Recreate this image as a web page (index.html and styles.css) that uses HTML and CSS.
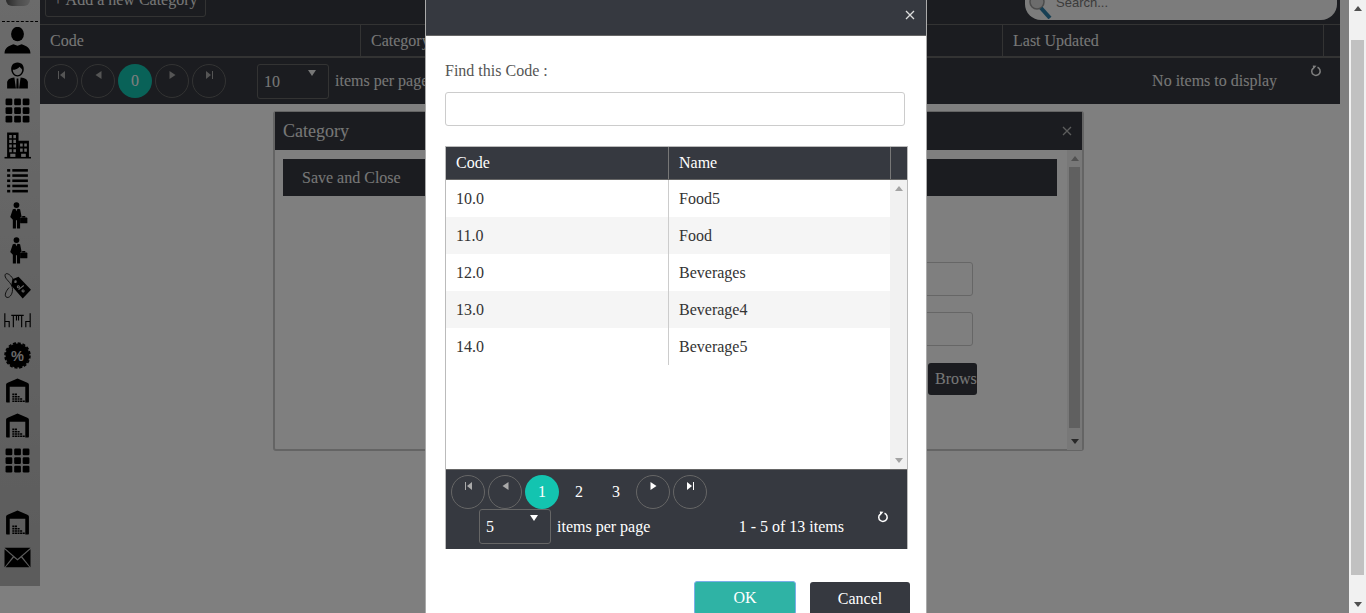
FILE: index.html
```html
<!DOCTYPE html>
<html lang="en">
<head>
  <meta charset="UTF-8">
  <title>Category</title>
  <link rel="stylesheet" href="styles.css">
</head>
<body>

<svg class="icon-defs" xmlns="http://www.w3.org/2000/svg">
  <symbol id="i-person" viewBox="0 0 26 26">
    <ellipse cx="13" cy="6.8" rx="6.2" ry="7"/>
    <path d="M0.5 25.5C0.5 20 4 18.5 9 16.5L13 18L17 16.5C22 18.5 25.5 20 25.5 25.5Z"/>
  </symbol>
  <symbol id="i-staff" viewBox="0 0 26 26">
    <path fill-rule="evenodd" d="M13 0.5C8.5 0.5 6.5 4 7 8C7.5 11 9.5 14 13 14C16.5 14 18.500 11 19 8C19.500 4 17.500 0.500 13 0.500ZM8.500 7.500C10.500 7.500 14 6.500 15 4.500C16 6 17.500 6.500 17.500 7.500C17.500 10 15.500 12.800 13 12.800C10.500 12.800 8.500 10 8.500 7.500Z"/>
    <path d="M3 25.500V20C3 17 6 15.500 10 15L11.500 25.500Z"/>
    <path d="M23 25.500V20C23 17 20 15.500 16 15L14.500 25.500Z"/>
    <path d="M12.200 16H13.800L14.200 25.500H11.800Z"/>
  </symbol>
  <symbol id="i-grid" viewBox="0 0 26 26">
    <rect x="1.500" y="1.500" width="6.500" height="6.500" rx="1.200"/><rect x="9.800" y="1.500" width="6.500" height="6.500" rx="1.200"/><rect x="18" y="1.500" width="6.500" height="6.500" rx="1.200"/>
    <rect x="1.500" y="9.800" width="6.500" height="6.500" rx="1.200"/><rect x="9.800" y="9.800" width="6.500" height="6.500" rx="1.200"/><rect x="18" y="9.800" width="6.500" height="6.500" rx="1.200"/>
    <rect x="1.500" y="18" width="6.500" height="6.500" rx="1.200"/><rect x="9.800" y="18" width="6.500" height="6.500" rx="1.200"/><rect x="18" y="18" width="6.500" height="6.500" rx="1.200"/>
  </symbol>
  <symbol id="i-building" viewBox="0 0 26 26">
    <path fill-rule="evenodd" d="M3 0.500H14V8.500H24V24H3ZM5 3V6H7.500V3ZM9 3V6H11.500V3ZM5 7.500V10.500H7.500V7.500ZM9 7.500V10.500H11.500V7.500ZM5 12V15H7.500V12ZM9 12V15H11.500V12ZM15.500 11V14H18V11ZM19.500 11V14H22V11ZM5 16.500V19.500H7.500V16.500ZM9 16.500V19.500H11.500V16.500ZM15.500 16V19H18V16ZM19.500 16V19H22V16ZM6 21V24H11V21ZM16.500 21V24H21V21Z"/>
    <rect x="0.500" y="24" width="25.500" height="1.500"/>
  </symbol>
  <symbol id="i-list" viewBox="0 0 26 26">
    <rect x="3" y="2" width="3" height="2.500"/><rect x="8" y="2" width="15" height="2.500"/>
    <rect x="3" y="7" width="3" height="2.500"/><rect x="8" y="7" width="15" height="2.500"/>
    <rect x="3" y="12" width="3" height="2.500"/><rect x="8" y="12" width="15" height="2.500"/>
    <rect x="3" y="17" width="3" height="2.500"/><rect x="8" y="17" width="15" height="2.500"/>
    <rect x="3" y="22" width="3" height="2.500"/><rect x="8" y="22" width="15" height="2.500"/>
  </symbol>
  <symbol id="i-agent" viewBox="0 0 26 26">
    <circle cx="12" cy="3" r="2.800"/>
    <path d="M8.500 7L11 6.500L12 9L13 6.500L15.500 7L17 14.500L15.500 15V25.500H12.500V17.500H11.500V25.500H8.500V17L6 14.500Z"/>
    <rect x="15.500" y="15" width="7" height="5.500" rx="0.600"/>
    <rect x="17.500" y="13.500" width="3" height="1.500"/>
  </symbol>
  <symbol id="i-tag" viewBox="0 0 26 26">
    <path fill="none" stroke="#000" stroke-width="0.800" d="M10 9C6 1 1 0 1 3.500C1 7 7 10 8 15C9 20 6 25 3 24.500C0 24 1 19 5 15"/>
    <path fill-rule="evenodd" d="M8 7L14 4.500L26 17L18 25.500L7 13ZM11 8A1.300 1.300 0 1 0 11 10.600A1.300 1.300 0 1 0 11 8Z"/>
    <path fill="none" stroke="#cfcfcf" stroke-width="1" d="M14 17L19 13M14.500 13.500A1 1 0 1 0 14.600 13.600M19 17.500A1 1 0 1 0 19.100 17.600"/>
  </symbol>
  <symbol id="i-tables" viewBox="0 0 26 26">
    <path fill="none" stroke="#000" stroke-width="1.100" d="M0.800 6V19.500M0.800 14H5V19.500M25.200 6V19.500M25.200 14H21V19.500M7 8H19M9 8V19.500M17 8V19.500M12 8V13M14 8V13"/>
  </symbol>
  <symbol id="i-sale" viewBox="0 0 26 26">
    <circle cx="13" cy="13" r="11.500"/>
    <circle cx="13" cy="13" r="12" fill="none" stroke="#000" stroke-width="1.500" stroke-dasharray="3 1.700"/>
    <text class="icon-percent" x="13" y="18" text-anchor="middle">%</text>
  </symbol>
  <symbol id="i-store" viewBox="0 0 26 26">
    <path fill-rule="evenodd" d="M2 7.500C2 6.500 2.500 6 3.500 5.500L13 1.500L22.500 5.500C23.500 6 24 6.500 24 7.500V23.500C24 24.200 23.600 24.500 23 24.500H3C2.400 24.500 2 24.200 2 23.500ZM5.500 9.500V24.500H20.500V9.500Z"/>
    <path d="M8 16H10V17.500H8ZM10.500 16H12.500V17.500H10.500ZM8 18.200H10V19.700H8ZM10.500 18.200H12.500V19.700H10.500ZM13 18.200H15V19.700H13ZM8 20.400H10V21.900H8ZM10.500 20.400H12.500V21.900H10.500ZM13 20.400H15V21.900H13ZM15.500 20.400H17.500V21.900H15.500ZM8 22.600H10V24H8ZM10.500 22.600H12.500V24H10.500ZM13 22.600H15V24H13ZM15.500 22.600H17.500V24H15.500ZM18 22.600H20V24H18Z"/>
  </symbol>
  <symbol id="i-mail" viewBox="0 0 26 26">
    <path d="M0.500 3.500H25.500L13 14.500Z"/>
    <path d="M0.500 5L8.500 12L0.500 22.500Z"/>
    <path d="M25.500 5L17.500 12L25.500 22.500Z"/>
    <path d="M9.500 13L13 16L16.500 13L24.500 22.500H1.500Z"/>
  </symbol>
  <symbol id="i-refresh" viewBox="0 0 12 12">
    <path fill="none" stroke="currentColor" stroke-width="1.500" d="M7.500 2.300A4.200 4.200 0 1 1 3 3.200"/>
    <path fill="currentColor" d="M2.800 0.500L6.500 0.800L3.200 4.800Z"/>
  </symbol>
  <symbol id="i-first" viewBox="0 0 9 8">
    <path fill="currentColor" d="M1 0H2V8H1ZM8 0V8L3 4Z"/>
  </symbol>
  <symbol id="i-prev" viewBox="0 0 9 8">
    <path fill="currentColor" d="M7.500 0V8L1.500 4Z"/>
  </symbol>
  <symbol id="i-next" viewBox="0 0 9 8">
    <path fill="currentColor" d="M1.500 0V8L7.500 4Z"/>
  </symbol>
  <symbol id="i-last" viewBox="0 0 9 8">
    <path fill="currentColor" d="M8 0H7V8H8ZM1 0V8L6 4Z"/>
  </symbol>
</svg>

<div class="page">
  <aside class="sidebar">
    <div class="logo"></div>
    <div class="logo-rule"></div>
    <nav class="nav">
      <svg class="nav-icon"><use href="#i-person"/></svg>
      <svg class="nav-icon"><use href="#i-staff"/></svg>
      <svg class="nav-icon"><use href="#i-grid"/></svg>
      <svg class="nav-icon"><use href="#i-building"/></svg>
      <svg class="nav-icon"><use href="#i-list"/></svg>
      <svg class="nav-icon"><use href="#i-agent"/></svg>
      <svg class="nav-icon"><use href="#i-agent"/></svg>
      <svg class="nav-icon"><use href="#i-tag"/></svg>
      <svg class="nav-icon"><use href="#i-tables"/></svg>
      <svg class="nav-icon"><use href="#i-sale"/></svg>
      <svg class="nav-icon"><use href="#i-store"/></svg>
      <svg class="nav-icon"><use href="#i-store"/></svg>
      <svg class="nav-icon nav-icon-last"><use href="#i-grid"/></svg>
      <svg class="nav-icon"><use href="#i-store"/></svg>
      <svg class="nav-icon"><use href="#i-mail"/></svg>
    </nav>
  </aside>

  <main class="content">
    <section class="list-panel">
      <div class="toolbar">
        <button class="add-btn">+ Add a new Category</button>
        <div class="search">
          <svg class="search-icon" viewBox="0 0 24 24">
            <circle cx="9" cy="7" r="7" fill="#d8d8d8" stroke="#999" stroke-width="1.500"/>
            <path d="M13 13L22 23" stroke="#2e7fa8" stroke-width="4"/>
          </svg>
          <span>Search...</span>
        </div>
      </div>
      <div class="list-head">
        <div class="list-col list-col-code">Code</div>
        <div class="list-col list-col-cat">Category</div>
        <div class="list-col list-col-date">Last Updated</div>
        <div class="list-col-end"></div>
      </div>
      <div class="pager list-pager">
        <div class="pager-nav">
          <a class="page-arrow off"><svg><use href="#i-first"/></svg></a>
          <a class="page-arrow off"><svg><use href="#i-prev"/></svg></a>
          <a class="page-num current">0</a>
          <a class="page-arrow off"><svg><use href="#i-next"/></svg></a>
          <a class="page-arrow off"><svg><use href="#i-last"/></svg></a>
        </div>
        <div class="page-size list-size">10<i class="caret"></i></div>
        <span class="page-size-label">items per page</span>
        <span class="page-info">No items to display</span>
        <svg class="refresh"><use href="#i-refresh"/></svg>
      </div>
    </section>
  </main>

  <div class="window">
    <div class="window-title">
      <span>Category</span>
      <svg class="close-x" viewBox="0 0 10 10"><path d="M1 1L9 9M9 1L1 9"/></svg>
    </div>
    <div class="window-body">
      <div class="window-main">
        <div class="save-bar">Save and Close</div>
        <div class="window-form">
          <div class="form-input"></div>
          <div class="form-input"></div>
          <div class="browse">Browse</div>
        </div>
      </div>
      <div class="vscroll window-scroll">
        <i class="arrow-up"></i>
        <div class="vscroll-thumb"></div>
        <i class="arrow-down"></i>
      </div>
    </div>
  </div>

  <div class="backdrop"></div>

  <div class="modal">
    <div class="modal-head">
      <svg class="close-x" viewBox="0 0 10 10"><path d="M1 1L9 9M9 1L1 9"/></svg>
    </div>
    <div class="modal-body">
      <label class="find-label">Find this Code :</label>
      <div class="find-input"></div>
      <div class="lookup">
        <div class="lookup-head">
          <div class="lookup-th">Code</div>
          <div class="lookup-th">Name</div>
          <div></div>
        </div>
        <div class="lookup-body">
          <div class="lookup-rows">
            <div class="lookup-row"><div>10.0</div><div>Food5</div></div>
            <div class="lookup-row alt"><div>11.0</div><div>Food</div></div>
            <div class="lookup-row"><div>12.0</div><div>Beverages</div></div>
            <div class="lookup-row alt"><div>13.0</div><div>Beverage4</div></div>
            <div class="lookup-row"><div>14.0</div><div>Beverage5</div></div>
          </div>
          <div class="vscroll lookup-scroll">
            <i class="arrow-up"></i>
            <i class="arrow-down"></i>
          </div>
        </div>
        <div class="lookup-pager">
          <div class="pager-nav">
            <a class="page-arrow off"><svg><use href="#i-first"/></svg></a>
            <a class="page-arrow off"><svg><use href="#i-prev"/></svg></a>
            <a class="page-num current">1</a>
            <a class="page-num">2</a>
            <a class="page-num">3</a>
            <a class="page-arrow"><svg><use href="#i-next"/></svg></a>
            <a class="page-arrow"><svg><use href="#i-last"/></svg></a>
          </div>
          <div class="pager">
            <div class="page-size lookup-size">5<i class="caret"></i></div>
            <span class="page-size-label">items per page</span>
            <span class="page-info">1 - 5 of 13 items</span>
            <svg class="refresh"><use href="#i-refresh"/></svg>
          </div>
        </div>
      </div>
      <div class="modal-actions">
        <button class="btn btn-ok">OK</button>
        <button class="btn btn-cancel">Cancel</button>
      </div>
    </div>
  </div>
</div>

<div class="page-scroll">
  <i class="arrow-up"></i>
  <div class="page-scroll-thumb"></div>
  <i class="arrow-down"></i>
</div>

</body>
</html>
```

FILE: styles.css
```css
* { box-sizing: border-box; }

html, body {
  margin: 0;
  height: 613px;
  overflow: hidden;
}

body {
  display: flex;
  background: #fff;
  font-family: "Liberation Serif", serif;
  font-size: 16px;
}

.icon-defs { display: none; }

.page {
  position: relative;
  display: flex;
  align-items: flex-start;
  width: 1349px;
  height: 613px;
  overflow: hidden;
  background: #fff;
}

/* sidebar */
.sidebar {
  flex: 0 0 40px;
  height: 586px;
  background: linear-gradient(#d6d6d6, #b8b8b8);
}

.logo {
  width: 24px;
  height: 6px;
  margin-left: 6px;
  border-radius: 0 0 12px 12px;
  background: linear-gradient(90deg, #555, #999 50%, #bbb);
}

.logo-rule {
  margin: 15px 2px 0;
  border-top: 1px dashed #000;
}

.nav {
  display: flex;
  flex-direction: column;
  margin-top: 5px;
  padding-left: 4px;
}

.nav-icon {
  width: 27px;
  height: 27px;
  margin-bottom: 8px;
  fill: #000;
}

.nav-icon-last { margin-bottom: 35px; }

.icon-percent {
  fill: #d0d0d0;
  font-family: "Liberation Sans", sans-serif;
  font-size: 14px;
  font-weight: bold;
}

/* list behind the dialogs, scrolled up a little */
.content {
  flex: 0 0 1300px;
  margin-top: -17px;
}

.list-panel {
  background: #363940;
  color: #eee;
}

.toolbar {
  display: flex;
  justify-content: space-between;
  height: 41px;
  padding: 0 3px 0 5px;
}

.add-btn {
  width: 161px;
  height: 34px;
  border: 1px solid #666;
  border-radius: 3px;
  background: none;
  color: #eee;
  font: 16px "Liberation Serif", serif;
}

.search {
  display: flex;
  align-items: flex-end;
  gap: 4px;
  width: 312px;
  height: 37px;
  padding: 0 0 10px 3px;
  border-radius: 0 0 16px 16px;
  background: #f8f8f8;
  color: #777;
  font: 13px "Liberation Sans", sans-serif;
}

.search-icon {
  flex: none;
  width: 24px;
  height: 24px;
  margin-bottom: -9px;
}

.list-head {
  display: flex;
  height: 34px;
  border-top: 1px solid #666;
  border-bottom: 2px solid #666;
  line-height: 32px;
}

.list-col {
  padding-left: 10px;
  border-right: 1px solid #666;
}

.list-col-code { width: 321px; }
.list-col-cat { width: 642px; }
.list-col-date { width: 321px; }
.list-col-end { flex: 1; }

/* pager parts, shared by both grids */
.pager {
  display: flex;
  align-items: center;
  color: #fff;
}

.list-pager {
  height: 46px;
  padding-left: 4px;
  color: #eee;
}

.pager-nav {
  display: flex;
  gap: 3px;
}

.page-arrow {
  display: flex;
  justify-content: center;
  width: 34px;
  height: 34px;
  padding-top: 6px;
  border: 1px solid #666;
  border-radius: 50%;
  color: #fff;
}

.page-arrow.off { color: #aaa; }

.page-arrow svg {
  width: 9px;
  height: 8px;
}

.page-num {
  width: 34px;
  height: 34px;
  color: #fff;
  line-height: 34px;
  text-align: center;
}

.page-num.current {
  border-radius: 50%;
  background: #13c4b0;
}

.page-size {
  position: relative;
  width: 72px;
  height: 35px;
  padding-left: 6px;
  border: 1px solid #666;
  border-radius: 3px;
  line-height: 33px;
}

.list-size { margin-left: 31px; }
.lookup-size { margin-left: 33px; }

.caret {
  position: absolute;
  top: 5px;
  right: 12px;
  border: 4px solid transparent;
  border-top: 6px solid currentColor;
  border-bottom: 0;
}

.page-size-label { margin-left: 6px; }

.page-info { margin-left: auto; }

.refresh {
  flex: none;
  width: 12px;
  height: 12px;
  margin: 0 18px 20px 33px;
  color: #fff;
}

/* category window */
.window {
  position: absolute;
  top: 111px;
  left: 273px;
  width: 811px;
  height: 340px;
  border: 2px solid #c8c8c8;
  border-top-width: 1px;
  border-radius: 3px;
  background: #fff;
}

.window-title {
  display: flex;
  justify-content: space-between;
  align-items: center;
  height: 38px;
  padding: 0 10px 0 8px;
  background: #363940;
  color: #eee;
  font-size: 18px;
}

.close-x {
  width: 10px;
  height: 10px;
  fill: none;
  stroke: #ddd;
  stroke-width: 1.300;
}

.window .close-x { stroke: #bbb; }

.window-body {
  display: flex;
  height: 300px;
}

.window-main {
  flex: 0 0 792px;
  padding: 9px 9px 0 8px;
}

.save-bar {
  width: 774px;
  height: 37px;
  padding-left: 19px;
  background: #363940;
  color: #eee;
  line-height: 37px;
}

.window-form {
  display: flex;
  flex-direction: column;
  align-items: flex-end;
  gap: 16px;
  margin-top: 66px;
  padding-right: 85px;
}

.form-input {
  width: 400px;
  height: 34px;
  border: 1px solid #ccc;
  border-radius: 3px;
}

.browse {
  width: 49px;
  height: 32px;
  margin: 1px -4px 0 0;
  padding-left: 7px;
  overflow: hidden;
  border-radius: 3px;
  background: #363940;
  color: #eee;
  line-height: 32px;
  white-space: nowrap;
}

.vscroll {
  position: relative;
  background: #f1f1f1;
}

.window-scroll {
  flex: 1;
  padding: 17px 2px 0;
}

.vscroll-thumb {
  height: 261px;
  background: #c1c1c1;
}

.arrow-up,
.arrow-down {
  position: absolute;
  left: 50%;
  margin-left: -4px;
  border: 4px solid transparent;
}

.arrow-up {
  top: 6px;
  border-bottom: 5px solid #a3a3a3;
  border-top: 0;
}

.arrow-down {
  bottom: 6px;
  border-top: 5px solid #a3a3a3;
  border-bottom: 0;
}

.window-scroll .arrow-down,
.page-scroll .arrow-up,
.page-scroll .arrow-down { border-top-color: #505050; border-bottom-color: #505050; }

.window-scroll .arrow-up { border-bottom-color: #a3a3a3; }

.backdrop {
  position: absolute;
  inset: 0;
  background: rgba(0, 0, 0, 0.5);
}

/* lookup dialog */
.modal {
  position: absolute;
  top: 0;
  left: 425px;
  width: 502px;
  height: 640px;
  border: 1px solid #aaa;
  border-top: 0;
  background: #fff;
}

.modal-head {
  display: flex;
  justify-content: flex-end;
  align-items: center;
  height: 36px;
  padding: 0 11px 6px 0;
  border-bottom: 1px solid #666;
  background: #363940;
}

.modal-body { padding: 26px 16px 0 19px; }

.find-label {
  display: block;
  color: #555;
  line-height: 18px;
}

.find-input {
  width: 460px;
  height: 34px;
  margin-top: 12px;
  border: 1px solid #ccc;
  border-radius: 3px;
}

.lookup {
  width: 463px;
  margin-top: 20px;
  border: 1px solid #bbb;
  border-bottom: 0;
}

.lookup-head {
  display: grid;
  grid-template-columns: 223px 222px 1fr;
  height: 33px;
  border-bottom: 1px solid #666;
  background: #363940;
  color: #fff;
  line-height: 32px;
}

.lookup-th {
  padding-left: 10px;
  border-right: 1px solid #777;
}

.lookup-body {
  display: flex;
  height: 289px;
}

.lookup-rows { flex: 0 0 444px; }

.lookup-row {
  display: grid;
  grid-template-columns: 223px 221px;
  height: 37px;
  color: #333;
  line-height: 37px;
}

.lookup-row.alt { background: #f5f5f5; }

.lookup-row > div { padding-left: 10px; }
.lookup-row > div:first-child { border-right: 1px solid #ccc; }

.lookup-scroll { flex: 1; }

.lookup-pager {
  height: 80px;
  padding-top: 5px;
  border-top: 1px solid #666;
  background: #363940;
}

.lookup-pager .pager-nav { padding-left: 5px; }

.modal-actions {
  display: flex;
  justify-content: flex-end;
  gap: 14px;
  margin-top: 32px;
}

.btn {
  height: 34px;
  border: 0;
  border-radius: 3px;
  color: #fff;
  font: 16px "Liberation Serif", serif;
}

.btn-ok {
  width: 102px;
  border: 1px solid #7aaee8;
  background: #2fb3a5;
}

.btn-cancel {
  width: 100px;
  margin-top: 1px;
  background: #363940;
}

/* page scrollbar */
.page-scroll {
  position: relative;
  flex: 0 0 17px;
  padding: 40px 2px 0;
  background: #f1f1f1;
}

.page-scroll-thumb {
  height: 535px;
  background: #c1c1c1;
}
```
